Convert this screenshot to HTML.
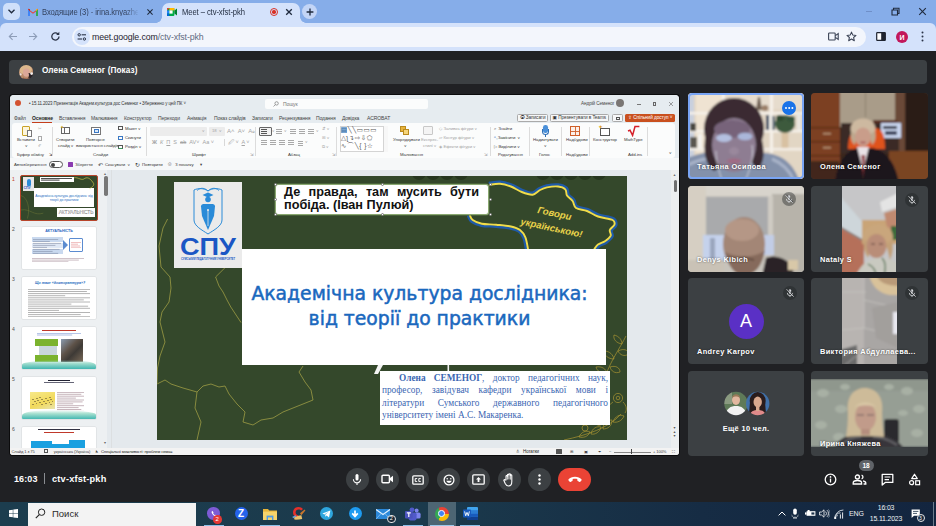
<!DOCTYPE html>
<html lang="uk">
<head>
<meta charset="utf-8">
<title>Meet – ctv-xfst-pkh</title>
<style>
*{box-sizing:border-box;margin:0;padding:0}
html,body{width:936px;height:526px;overflow:hidden;background:#202124;font-family:"Liberation Sans","DejaVu Sans",sans-serif;}
#root{position:relative;width:936px;height:526px;overflow:hidden;background:#202124}
.abs{position:absolute}
.t{position:absolute;white-space:nowrap;line-height:1}
/* chrome */
#tabstrip{left:0;top:0;width:936px;height:32px;background:#86ade9}
#toolbar{left:0;top:23px;width:936px;height:28px;background:#d4e2fb;border-radius:6px 6px 0 0}
#omni{left:72px;top:27px;width:794px;height:20px;border-radius:10px;background:#f3f6fc}
#acttab{left:162px;top:3px;width:138px;height:21px;background:#d4e2fb;border-radius:7px 7px 0 0}
/* meet */
#pbar{left:9px;top:60px;width:918px;height:24px;border-radius:4px;background:#3c4043}
.tile{position:absolute;border-radius:4px;background:#3c4043;overflow:hidden}
.nm{position:absolute;left:9px;bottom:8px;color:#fff;font-size:7.4px;font-weight:bold;white-space:nowrap;letter-spacing:0.36px;text-shadow:0 0 2px rgba(0,0,0,.6)}
.mute{position:absolute;right:6px;top:6px;width:14px;height:14px;border-radius:50%;background:rgba(32,33,36,.65)}
.mb{position:absolute;top:468px;width:23px;height:23px;border-radius:50%;background:#3c4043}
.s5{font-size:5px;letter-spacing:-0.1px}
.g{color:#3a3a3a}.lg{color:#a5a5a5}
.sep{top:32px;width:0.7px;height:29px;background:#dcdcdc}
.lines{height:5px;background:repeating-linear-gradient(180deg,#555 0 0.7px,transparent 0.7px 2px)}
.l2{background:repeating-linear-gradient(180deg,#a9a9a9 0 0.7px,transparent 0.7px 2px)}
.s5r{font-size:4.3px;letter-spacing:-0.05px}
.s4{font-size:4.1px;letter-spacing:-0.1px}
.thumb{left:12px;width:74px;height:41.5px;background:#fff;border-radius:1px;overflow:hidden;box-shadow:0 0 0 0.5px #d5d8da}
.hd{position:absolute;width:3.4px;height:3.4px;border-radius:50%;background:#fff;border:0.6px solid #777}
/* taskbar */
#taskbar{left:0;top:501.5px;width:936px;height:24.5px;background:linear-gradient(90deg,#1c3d4e 0%,#1b3a4c 45%,#162c44 75%,#13253f 100%)}
</style>
</head>
<body>
<div id="root">

<!-- ===== CHROME TAB STRIP ===== -->
<div id="tabstrip" class="abs"></div>
<div class="abs" style="left:3px;top:3px;width:17px;height:17px;border-radius:5px;background:#cfdffa"></div>
<svg class="abs" style="left:7px;top:8px" width="9" height="7" viewBox="0 0 9 7"><path d="M1.5 1.8 L4.5 4.8 L7.5 1.8" fill="none" stroke="#1f2a3d" stroke-width="1.3"/></svg>
<!-- gmail icon -->
<svg class="abs" style="left:28px;top:8px" width="10" height="8" viewBox="0 0 10 8"><path d="M0 8V0.8L5 4.6 10 0.8V8H8V3.4L5 5.8 2 3.4V8Z" fill="#ea4335"/><rect x="0" y="2" width="2" height="6" fill="#4285f4"/><rect x="8" y="2" width="2" height="6" fill="#34a853"/><path d="M0 0.8 L2 3.4V1.2Z" fill="#c5221f"/><path d="M10 0.8 L8 3.4V1.2Z" fill="#fbbc04"/></svg>
<div class="t" style="left:42px;top:7.700px;width:108px;overflow:hidden;font-size:8.6px;color:#34435f;letter-spacing:-0.1px;transform:scaleX(.89);transform-origin:0 0">Входящие (3) - irina.knyazheva</div>
<div class="abs" style="left:125px;top:4px;width:15px;height:16px;background:linear-gradient(90deg,rgba(134,173,233,0),#86ade9)"></div>
<svg class="abs" style="left:146px;top:8px" width="8" height="8" viewBox="0 0 8 8"><path d="M1.400 1.400L6.600 6.600M6.600 1.400L1.400 6.600" stroke="#1f2a3d" stroke-width="1.050"/></svg>
<!-- active tab -->
<div id="acttab" class="abs"></div>
<div class="abs" style="left:156px;top:17px;width:6px;height:6px;background:radial-gradient(circle at 0 0,rgba(0,0,0,0) 5.5px,#d4e2fb 6px)"></div>
<div class="abs" style="left:300px;top:17px;width:6px;height:6px;background:radial-gradient(circle at 100% 0,rgba(0,0,0,0) 5.5px,#d4e2fb 6px)"></div>
<!-- meet icon -->
<svg class="abs" style="left:167px;top:8px" width="10" height="8" viewBox="0 0 10 8"><rect x="0" y="0" width="7.4" height="8" rx="1" fill="#00ac47"/><path d="M0 2.4 L2.4 0 H0Z" fill="#ea4335"/><rect x="0" y="2.4" width="2.4" height="3.2" fill="#2684fc"/><rect x="2.4" y="0" width="5" height="2.4" fill="#ffba00"/><rect x="0" y="5.6" width="2.4" height="2.4" rx="0.6" fill="#0066da"/><rect x="2.4" y="2.4" width="3.2" height="3.2" fill="#fff"/><path d="M7.4 2.6 L10 0.6 V7.4 L7.4 5.4Z" fill="#00832d"/></svg>
<div class="t" style="left:181.5px;top:7.700px;font-size:8.6px;color:#1f2a3d;letter-spacing:-0.1px;transform:scaleX(.89);transform-origin:0 0">Meet – ctv-xfst-pkh</div>
<div class="abs" style="left:270px;top:8px;width:8px;height:8px;border-radius:50%;border:1.2px solid #d93025;"></div>
<div class="abs" style="left:272.3px;top:10.3px;width:3.4px;height:3.4px;border-radius:50%;background:#d93025"></div>
<svg class="abs" style="left:285px;top:8px" width="8" height="8" viewBox="0 0 8 8"><path d="M1.2 1.2L6.8 6.8M6.8 1.2L1.2 6.8" stroke="#1f2a3d" stroke-width="1.3"/></svg>
<!-- new tab -->
<div class="abs" style="left:302px;top:4px;width:15px;height:15px;border-radius:50%;background:#c3d5f6"></div>
<svg class="abs" style="left:305.5px;top:7.5px" width="8" height="8" viewBox="0 0 8 8"><path d="M4 0.6V7.4M0.6 4H7.4" stroke="#1f2a3d" stroke-width="1.3"/></svg>
<!-- window controls -->
<div class="abs" style="left:866px;top:11px;width:6px;height:1px;background:#6f8fc8"></div>
<svg class="abs" style="left:891px;top:7px" width="9" height="9" viewBox="0 0 9 9"><path d="M1 3H6.5V8H1Z M2.5 3V1.2H8V6.5H6.5" fill="none" stroke="#1f2a3d" stroke-width="1.1"/></svg>
<svg class="abs" style="left:918px;top:7px" width="9" height="9" viewBox="0 0 9 9"><path d="M1.2 1.2L7.8 7.8M7.8 1.2L1.2 7.8" stroke="#1f2a3d" stroke-width="1.1"/></svg>

<!-- ===== CHROME TOOLBAR ===== -->
<div id="toolbar" class="abs"></div>
<div id="omni" class="abs"></div>
<svg class="abs" style="left:8px;top:32px" width="10" height="9" viewBox="0 0 10 9"><path d="M9 4.5H1.5M4.6 1.2L1.3 4.5 4.6 7.8" fill="none" stroke="#8d9db8" stroke-width="1.1"/></svg>
<svg class="abs" style="left:28px;top:32px" width="10" height="9" viewBox="0 0 10 9"><path d="M1 4.5H8.5M5.4 1.2L8.7 4.5 5.4 7.8" fill="none" stroke="#8d9db8" stroke-width="1.1"/></svg>
<svg class="abs" style="left:50px;top:31px" width="11" height="11" viewBox="0 0 11 11"><path d="M9 5.5A3.6 3.6 0 1 1 7.9 2.9" fill="none" stroke="#2a3347" stroke-width="1.3"/><path d="M9.3 0.8V3.9H6.2Z" fill="#2a3347"/></svg>
<div class="abs" style="left:74px;top:29px;width:16px;height:16px;border-radius:50%;background:#d4e2fb"></div>
<svg class="abs" style="left:77px;top:33px" width="10" height="8" viewBox="0 0 10 8"><circle cx="2.2" cy="1.8" r="1.2" fill="none" stroke="#2a3347" stroke-width="1"/><path d="M4.6 1.8H9" stroke="#2a3347" stroke-width="1.1"/><circle cx="7.4" cy="6" r="1.2" fill="none" stroke="#2a3347" stroke-width="1"/><path d="M0.6 6H5" stroke="#2a3347" stroke-width="1.1"/></svg>
<div class="t" style="left:92px;top:32.800px;font-size:8.8px;color:#1f2430;letter-spacing:-0.12px">meet.google.com<span style="color:#5f6b80">/ctv-xfst-pkh</span></div>
<!-- right icons -->
<svg class="abs" style="left:828px;top:32px" width="11" height="9" viewBox="0 0 11 9"><rect x="0.6" y="1" width="6.6" height="7" rx="0.8" fill="none" stroke="#3a4254" stroke-width="1.1"/><path d="M7.4 3.6L10.2 1.6V7.4L7.4 5.4" fill="none" stroke="#3a4254" stroke-width="1.1"/></svg>
<svg class="abs" style="left:846px;top:31px" width="11" height="11" viewBox="0 0 11 11"><path d="M5.5 1.1L6.8 4.1 10 4.4 7.6 6.5 8.3 9.7 5.5 8 2.7 9.7 3.4 6.5 1 4.4 4.2 4.1Z" fill="none" stroke="#3a4254" stroke-width="1.05" stroke-linejoin="round"/></svg>
<svg class="abs" style="left:876px;top:32px" width="10" height="9" viewBox="0 0 10 9"><rect x="0.7" y="0.7" width="8.6" height="7.6" rx="0.6" fill="#fff" stroke="#1f2430" stroke-width="1.2"/><rect x="5.2" y="0.7" width="4.1" height="7.6" fill="#1f2430"/></svg>
<div class="abs" style="left:896px;top:31px;width:12px;height:12px;border-radius:50%;background:#c2185b"></div>
<div class="t" style="left:896px;top:33.5px;width:12px;text-align:center;font-size:7px;font-weight:bold;color:#fff">И</div>
<svg class="abs" style="left:921px;top:31px" width="3" height="11" viewBox="0 0 3 11"><circle cx="1.5" cy="1.6" r="1" fill="#2a3347"/><circle cx="1.5" cy="5.5" r="1" fill="#2a3347"/><circle cx="1.5" cy="9.4" r="1" fill="#2a3347"/></svg>

<!-- ===== MEET PRESENTER BAR ===== -->
<div id="pbar" class="abs"></div>
<svg class="abs" style="left:18.800px;top:64.600px" width="14.400" height="14.400" viewBox="0 0 14.400 14.400"><defs><clipPath id="cpv"><circle cx="7.200" cy="7.200" r="7.200"/></clipPath></defs><g clip-path="url(#cpv)"><g filter="url(#b05)"><rect width="14.400" height="14.400" fill="#b98a6a"/><ellipse cx="6.500" cy="4.500" rx="6.500" ry="5" fill="#dcb78c"/><ellipse cx="7.400" cy="7.600" rx="3.400" ry="4.200" fill="#dba898"/><path d="M1 7 C0 10 1 13 3 14.400 L0 14.400 V7Z" fill="#c99a78"/><path d="M9.500 8 C12 8 14.400 9 14.400 11 V14.400 H8 C10 13 10.500 10 9.500 8Z" fill="#2a2026"/><circle cx="12.600" cy="8.600" r="1.300" fill="#f4f0f0"/><circle cx="1.600" cy="9.400" r="1.100" fill="#efe6e2"/><path d="M4 12.500 C6 14 9 14 10.500 12.500 V14.400 H4Z" fill="#8a5a4a"/></g></g></svg>
<div class="t" style="left:42px;top:67px;font-size:8.2px;font-weight:bold;color:#fff;letter-spacing:0.1px">Олена Семеног (Показ)</div>

<!-- ===== SCREEN SHARE (PowerPoint) ===== -->
<div class="abs" style="left:9px;top:94px;width:671px;height:362px;background:#0b0b0c;border-radius:4px"></div>
<div id="ppt" class="abs" style="left:10px;top:95px;width:669px;height:360px;background:#e6ecf0;border-radius:4px 4px 3px 3px;overflow:hidden">
  <!-- title bar -->
  <div class="abs" style="left:0;top:0;width:669px;height:28px;background:#e6ecf0"></div>
  <div class="abs" style="left:5px;top:5px;width:6px;height:6px;border-radius:50%;background:#d35230"></div>
  <div class="t s5" style="left:19px;top:7.300px;color:#333;font-size:4.450px">• 15.11.2023 Презентація Академ.культура дос Семеног • Збережено у цей ПК ˅</div>
  <div class="abs" style="left:255px;top:3.500px;width:162.500px;height:10.500px;border-radius:2px;background:#fbfcfc"></div>
  <div class="t s5" style="left:273px;top:6.500px;color:#777">Пошук</div>
  <svg class="abs" style="left:263px;top:5.800px" width="6" height="6" viewBox="0 0 6 6"><circle cx="3.6" cy="2.4" r="1.7" fill="none" stroke="#666" stroke-width="0.6"/><path d="M2.3 3.7L0.5 5.5" stroke="#666" stroke-width="0.6"/></svg>
  <div class="t s5r" style="left:571px;top:7px;color:#444;font-size:4.6px">Андрій Семеног</div>
  <div class="abs" style="left:606px;top:4px;width:8px;height:8px;border-radius:50%;background:#7a7674"></div>
  <div class="abs" style="left:626.500px;top:9px;width:4px;height:1px;background:#777"></div>
  <div class="abs" style="left:642.500px;top:7px;width:3px;height:4px;border:0.6px solid #666"></div>
  <svg class="abs" style="left:657.700px;top:6px" width="6" height="6" viewBox="0 0 6 6"><path d="M1 1L5 5M5 1L1 5" stroke="#666" stroke-width="0.6"/></svg>
  <!-- tabs -->
  <div class="t s5" style="left:4px;top:21px;color:#444">Файл</div>
  <div class="t s5" style="left:22px;top:21px;color:#222;font-weight:bold">Основне</div>
  <div class="abs" style="left:22px;top:27px;width:20px;height:1px;background:#c43e1c"></div>
  <div class="t s5" style="left:49px;top:21px;color:#444">Вставлення</div>
  <div class="t s5" style="left:81px;top:21px;color:#444">Малювання</div>
  <div class="t s5" style="left:114px;top:21px;color:#444">Конструктор</div>
  <div class="t s5" style="left:148px;top:21px;color:#444">Переходи</div>
  <div class="t s5" style="left:177px;top:21px;color:#444">Анімація</div>
  <div class="t s5" style="left:204px;top:21px;color:#444">Показ слайдів</div>
  <div class="t s5" style="left:242px;top:21px;color:#444">Записати</div>
  <div class="t s5" style="left:269px;top:21px;color:#444">Рецензування</div>
  <div class="t s5" style="left:306px;top:21px;color:#444">Подання</div>
  <div class="t s5" style="left:332px;top:21px;color:#444">Довідка</div>
  <div class="t s5" style="left:357px;top:21px;color:#444">ACROBAT</div>
  <!-- right buttons -->
  <div class="abs" style="left:507px;top:19px;width:31px;height:8px;border:0.6px solid #aaa;border-radius:1.5px;background:#f6f7f8"></div>
  <div class="t s5r" style="left:509.500px;top:20.800px;color:#333;font-size:4.700px">⦿ Записати</div>
  <div class="abs" style="left:540px;top:19px;width:59px;height:8px;border:0.6px solid #aaa;border-radius:1.5px;background:#f6f7f8"></div>
  <div class="t s5r" style="left:542.500px;top:20.800px;color:#333;font-size:4.700px">▣ Презентувати в Teams</div>
  <div class="abs" style="left:602px;top:19px;width:11px;height:8px;border:0.6px solid #aaa;border-radius:1.5px;background:#f6f7f8"></div>
  <div class="abs" style="left:605.5px;top:21.5px;width:4px;height:3px;border:0.6px solid #555"></div>
  <div class="abs" style="left:615px;top:19px;width:50px;height:8px;border-radius:1.5px;background:#c9501f"></div>
  <div class="t s5r" style="left:618px;top:20.800px;color:#fff;font-size:4.700px">⇪ Спільний доступ ˅</div>
  <!-- ribbon card -->
  <div class="abs" style="left:2px;top:28.300px;width:663px;height:34.700px;background:#fbfcfc;border-radius:3px"></div>
  <div class="abs" style="left:0;top:63px;width:669px;height:12px;background:#f6f8f9"></div>
    <!-- clipboard group -->
  <div class="abs" style="left:12px;top:31px;width:8px;height:10px;border:0.8px solid #c9a227;border-radius:1px;background:#fdf6dc"></div>
  <div class="abs" style="left:17px;top:35px;width:5px;height:7px;border:0.7px solid #777;background:#fff"></div>
  <div class="t s5r g" style="left:7px;top:43px">Вставити</div>
  <div class="t s5r g" style="left:15px;top:49px">˅</div>
  <div class="t s5r g" style="left:7px;top:57.5px">Буфер обміну</div>
  <div class="t s5r lg" style="left:28px;top:32px">✂</div>
  <div class="abs" style="left:28px;top:41px;width:3.5px;height:4.5px;border:0.6px solid #aaa"></div>
  <div class="t s5r lg" style="left:28px;top:49px">✐</div>
  <div class="t s5r g" style="left:39px;top:57.5px">⇲</div>
  <div class="abs sep" style="left:42px"></div>
  <!-- slides group -->
  <div class="abs" style="left:51px;top:32px;width:9px;height:7px;border:0.8px solid #666;background:#fff"></div>
  <div class="abs" style="left:54px;top:32px;width:0.8px;height:7px;background:#666"></div>
  <div class="abs" style="left:50px;top:30px;width:4px;height:4px;color:#c9a227;font-size:5px;line-height:4px">✦</div>
  <div class="t s5r g" style="left:46px;top:43px">Створити</div>
  <div class="t s5r g" style="left:48px;top:49px">слайд ˅</div>
  <div class="abs" style="left:81px;top:32px;width:10px;height:7.5px;border:0.8px solid #777;background:#fff"></div>
  <div class="abs" style="left:83.5px;top:34px;width:5px;height:4px;border:0.7px solid #3b78c3;background:#dbe8f7"></div>
  <div class="t s5r g" style="left:76px;top:43px">Повторне</div>
  <div class="t s5r g" style="left:66px;top:49px">використання слайдів</div>
  <div class="abs" style="left:108px;top:31px;width:5px;height:4px;border:0.7px solid #555;border-top-width:1.4px"></div>
  <div class="t s5r g" style="left:115px;top:31.5px">Макет ˅</div>
  <div class="abs" style="left:108px;top:40.5px;width:5px;height:4px;border:0.7px solid #3b78c3"></div>
  <div class="t s5r g" style="left:115px;top:41px">Скинути</div>
  <div class="abs" style="left:108px;top:49.5px;width:5px;height:4px;border:0.7px solid #555;border-bottom:1.4px solid #3a9b5c"></div>
  <div class="t s5r g" style="left:115px;top:50px">Розділ ˅</div>
  <div class="t s5r g" style="left:83px;top:57.5px">Слайди</div>
  <div class="abs sep" style="left:136px"></div>
  <!-- font group -->
  <div class="abs" style="left:140px;top:32px;width:57px;height:9px;background:#ececec;border-radius:1px"></div>
  <div class="t s5r lg" style="left:192px;top:34px">˅</div>
  <div class="abs" style="left:199px;top:32px;width:16px;height:9px;background:#ececec;border-radius:1px"></div>
  <div class="t s5r lg" style="left:202px;top:34px">18 &nbsp;˅</div>
  <div class="t s5r lg" style="left:217px;top:33px;font-size:6px">A˄ &nbsp;A˅ &nbsp;A<span style="font-size:4px">ⱺ</span></div>
  <div class="t s5r lg" style="left:142px;top:45px;font-size:5.5px;letter-spacing:0"><b>Ж</b> &nbsp;<i>К</i> &nbsp;<u>П</u> &nbsp;S &nbsp;<s>ab</s> &nbsp;AV˅ &nbsp;Aa ˅</div>
  <div class="abs" style="left:214px;top:44px;width:0.6px;height:7px;background:#d8d8d8"></div>
  <div class="t s5r lg" style="left:218px;top:45px;font-size:5.5px">🖉 ˅ &nbsp;<u>A</u> ˅</div>
  <div class="t s5r g" style="left:182px;top:57.5px">Шрифт</div>
  <div class="t s5r lg" style="left:240px;top:57.5px">⇲</div>
  <div class="abs sep" style="left:245px"></div>
  <!-- paragraph group -->
  <div class="abs" style="left:248.5px;top:32px;width:13px;height:9px;border:0.7px solid #666;border-radius:1px;background:#f1f1f1"></div>
  <div class="abs lines" style="left:250.5px;top:34px;width:6px"></div>
  <div class="abs lines l2" style="left:266px;top:34px;width:6px"></div>
  <div class="abs lines l2" style="left:280px;top:34px;width:6px"></div>
  <div class="abs lines l2" style="left:289px;top:34px;width:6px"></div>
  <div class="abs lines l2" style="left:298px;top:34px;width:6px"></div>
  <div class="t s5r lg" style="left:262px;top:34px">˅</div><div class="t s5r lg" style="left:274px;top:34px">˅</div><div class="t s5r lg" style="left:306px;top:34px">˅</div>
  <div class="abs lines l2" style="left:251px;top:45px;width:6px"></div>
  <div class="abs lines l2" style="left:260px;top:45px;width:6px"></div>
  <div class="abs lines l2" style="left:269px;top:45px;width:6px"></div>
  <div class="abs lines l2" style="left:278px;top:45px;width:6px"></div>
  <div class="abs lines l2" style="left:288px;top:46px;width:5px"></div>
  <div class="t s5r lg" style="left:295px;top:45px">˅</div>
  <div class="t s5r lg" style="left:312px;top:31.5px">⇵ ˅</div>
  <div class="t s5r lg" style="left:312px;top:40.5px">⊞ ˅</div>
  <div class="t s5r lg" style="left:312px;top:49.5px">⧉ ˅</div>
  <div class="t s5r g" style="left:278px;top:57.5px">Абзац</div>
  <div class="t s5r lg" style="left:322px;top:57.5px">⇲</div>
  <div class="abs sep" style="left:326px"></div>
  <!-- drawing group -->
  <div class="abs" style="left:330px;top:31px;width:48px;height:26px;border:0.6px solid #d4d4d4;background:#fff"></div>
  <div class="t" style="left:331px;top:32px;font-size:6.5px;color:#555;letter-spacing:0.6px">▤╲╲▭▭▭</div>
  <div class="t" style="left:331px;top:40px;font-size:6.5px;color:#555;letter-spacing:0.6px">△ʅ↴⇨⇩⬠</div>
  <div class="t" style="left:331px;top:48px;font-size:6.5px;color:#555;letter-spacing:0.6px">∿⌒╲{ }☆</div>
  <div class="abs" style="left:331px;top:32px;width:6px;height:6px;background:#2f7fd0;opacity:.55"></div>
  <div class="abs" style="left:373px;top:31px;width:5px;height:26px;border-left:0.6px solid #d4d4d4;background:#f7f7f7"></div>
  <div class="abs" style="left:390px;top:31px;width:6px;height:6px;background:#e8b33a;border:0.6px solid #b98a1f"></div>
  <div class="abs" style="left:393px;top:34px;width:6px;height:6px;background:#f5d57a;border:0.6px solid #b98a1f"></div>
  <div class="t s5r g" style="left:383px;top:43px">Упорядкувати</div>
  <div class="t s5r g" style="left:394px;top:49px">˅</div>
  <div class="abs" style="left:413px;top:31px;width:10px;height:9px;border:0.7px solid #c8c8c8;border-radius:1px;background:#f4f4f4"></div>
  <div class="t s5r lg" style="left:411px;top:43px">Експрес-</div>
  <div class="t s5r lg" style="left:413px;top:49px">стилі ˅</div>
  <div class="t s5r lg" style="left:429px;top:31.5px">◇ Заливка фігури ˅</div>
  <div class="t s5r lg" style="left:429px;top:40.5px">▱ Контур фігури ˅</div>
  <div class="t s5r lg" style="left:429px;top:49.5px">◈ Ефекти фігури ˅</div>
  <div class="t s5r g" style="left:390px;top:57.5px">Малювання</div>
  <div class="t s5r lg" style="left:474px;top:57.5px">⇲</div>
  <div class="abs sep" style="left:480px"></div>
  <!-- editing -->
  <div class="t s5r g" style="left:484px;top:31.5px">⌕ &nbsp;Знайти</div>
  <div class="t s5r g" style="left:484px;top:40.5px"><span style="color:#3b78c3">ᵃ꜀</span> Замінити &nbsp;˅</div>
  <div class="t s5r g" style="left:484px;top:49.5px">▷ Виділити ˅</div>
  <div class="t s5r g" style="left:488px;top:57.5px">Редагування</div>
  <div class="abs sep" style="left:519px"></div>
  <!-- voice -->
  <div class="abs" style="left:533px;top:30px;width:4.6px;height:8px;border-radius:2.3px;background:#4a90d9"></div>
  <div class="abs" style="left:531.5px;top:34px;width:7.6px;height:6px;border:0.8px solid #2f6fb5;border-top:none;border-radius:0 0 4px 4px"></div>
  <div class="abs" style="left:535px;top:40px;width:0.8px;height:2px;background:#2f6fb5"></div>
  <div class="t s5r g" style="left:523px;top:43px">Надиктувати</div>
  <div class="t s5r g" style="left:534px;top:49px">˅</div>
  <div class="t s5r g" style="left:529px;top:57.5px">Голос</div>
  <div class="abs sep" style="left:551px"></div>
  <!-- addins -->
  <div class="abs" style="left:560px;top:31px;width:10px;height:10px;border:0.9px solid #d0602a;background:linear-gradient(#d0602a,#d0602a) 50% 0/0.9px 100% no-repeat,linear-gradient(#d0602a,#d0602a) 0 50%/100% 0.9px no-repeat,#fdf1ea"></div>
  <div class="t s5r g" style="left:556px;top:43px">Надбудови</div>
  <div class="t s5r g" style="left:556px;top:57.5px">Надбудови</div>
  <div class="abs sep" style="left:579px"></div>
  <div class="abs" style="left:590px;top:33px;width:10px;height:8px;border:0.8px solid #555;border-top-width:1.6px;background:#fff"></div>
  <div class="t" style="left:588px;top:29px;font-size:6px;color:#e0a020">✦</div>
  <div class="t s5r g" style="left:583px;top:43px">Конструктор</div>
  <svg class="abs" style="left:617px;top:30px" width="13" height="12" viewBox="0 0 13 12"><path d="M1 6L3 5.2 5.6 10.4 8 1.6H12.4" fill="none" stroke="#d5202a" stroke-width="1.5"/></svg>
  <div class="t s5r g" style="left:614px;top:43px">MathType</div>
  <div class="t s5r g" style="left:618px;top:57.5px">Add-ins</div>
  <div class="abs sep" style="left:637px"></div>
  <div class="t s5r g" style="left:659px;top:56px">˅</div>
  <!-- quick access -->
  <div class="t s5r g" style="left:4px;top:67.5px">Автозбереження</div>
  <div class="abs" style="left:39px;top:66px;width:14px;height:7px;border:0.7px solid #555;border-radius:3.5px;background:#fff"></div>
  <div class="abs" style="left:40.5px;top:67.5px;width:4px;height:4px;border-radius:50%;background:#444"></div>
  <div class="abs" style="left:58px;top:67px;width:5px;height:5px;background:#8a3ab0;border-radius:0.6px"></div>
  <div class="t s5r g" style="left:65px;top:67.5px">Зберегти</div>
  <div class="t s5r g" style="left:88px;top:67px;font-size:6px">↶</div>
  <div class="t s5r g" style="left:95px;top:67.5px">Скасувати &nbsp;˅</div>
  <div class="t s5r g" style="left:125px;top:67px;font-size:6px">↻</div>
  <div class="t s5r g" style="left:132px;top:67.5px">Повторити</div>
  <div class="t s5r g" style="left:158px;top:67px">⎙</div>
  <div class="t s5r g" style="left:165px;top:67.5px">З початку</div>
  <div class="t s5r g" style="left:190px;top:67.5px">▾</div>

  <!-- slide workspace -->
  <div class="abs" style="left:0;top:75px;width:669px;height:278px;background:#e4e9ed"></div>
  <div class="abs" style="left:0;top:75px;width:97px;height:278px;background:#edf0f2"></div>
    <!-- thumbnails panel -->
  <div class="t s5" style="left:2px;top:82px;color:#c43e1c">1</div>
  <div class="t s5" style="left:2px;top:132px;color:#555">2</div>
  <div class="t s5" style="left:2px;top:182px;color:#555">3</div>
  <div class="t s5" style="left:2px;top:232px;color:#555">4</div>
  <div class="t s5" style="left:2px;top:282px;color:#555">5</div>
  <div class="t s5" style="left:2px;top:332px;color:#555">6</div>
  <!-- thumb 1 -->
  <div class="abs" style="left:10px;top:80px;width:78px;height:46px;border:1.5px solid #b8452b;border-radius:2px;background:#34482b;overflow:hidden">
    <div class="abs" style="left:2px;top:1px;width:11px;height:14px;background:#e8e8e8"></div>
    <div class="abs" style="left:5.5px;top:2.5px;width:4px;height:7px;border-radius:2px 2px 1px 1px;background:#2a8bd8"></div>
    <div class="t" style="left:2.5px;top:10.5px;font-size:3.5px;font-weight:bold;color:#1a56c4">СПУ</div>
    <div class="abs" style="left:19px;top:1px;width:34px;height:5px;background:#fff"></div>
    <svg class="abs" style="left:20px;top:1.8px;opacity:1" width="31" height="3.4" viewBox="0 0 31 3.4"><path d="M0 0.4H31M0 2.1H18.6M0 3.8H31" stroke="#222" stroke-width="0.9" fill="none"/></svg>
    <div class="abs" style="left:13px;top:12px;width:60px;height:19px;background:#fff"></div>
    <div class="t" style="left:13px;top:17.5px;width:60px;text-align:center;font-size:3.4px;line-height:4.3px;color:#1f6fbf;white-space:normal">Академічна культура дослідника: від теорії до практики</div>
    <div class="abs" style="left:36px;top:32px;width:38px;height:9px;background:#fff"></div>
    <div class="t" style="left:36px;top:33.5px;width:38px;text-align:center;font-size:5px;color:#222;letter-spacing:-0.2px;-webkit-text-stroke:0.2px #fff">АКТУАЛЬНІСТЬ</div>
    <svg class="abs" style="left:0;top:0" width="75" height="43" viewBox="0 0 470 264"><path d="M333 8C360 4 380 30 400 12 420 0 440 20 455 44 460 60 440 70 430 76" fill="none" stroke="#d9cf4a" stroke-width="4"/><path d="M0 120C40 130 60 200 40 264M0 210C60 200 80 250 140 230" fill="none" stroke="#8f9440" stroke-width="2"/></svg>
  </div>
  <!-- thumb 2 -->
  <div class="abs thumb" style="top:132px">
    <div class="t" style="left:0;top:3px;width:74px;text-align:center;font-size:3.6px;font-weight:bold;color:#2a5fc0">АКТУАЛЬНІСТЬ</div>
    <div class="abs" style="left:10px;top:10px;width:31px;height:5px;background:#c9d9ef"></div>
    <div class="abs" style="left:10px;top:16px;width:31px;height:5px;background:#dfe8f5"></div>
    <div class="abs" style="left:10px;top:22px;width:31px;height:5px;background:#c9d9ef"></div>
    <svg class="abs" style="left:11px;top:11.5px;opacity:0.8" width="28" height="15" viewBox="0 0 28 15"><path d="M0 0.4H25.2M0 2.4H16.8M0 4.4H28M0 6.4H22.4M0 8.4H14.0M0 10.4H26.6M0 12.4H19.6M0 14.4H25.2" stroke="#56617a" stroke-width="0.5" fill="none"/></svg>
    <div class="abs" style="left:41px;top:13px;width:0;height:0;border-left:5px solid #5b8bd0;border-top:5.5px solid transparent;border-bottom:5.5px solid transparent"></div>
    <div class="abs" style="left:47px;top:11px;width:14px;height:14px;border:0.6px solid #5b8bd0;border-radius:1px"></div>
    <svg class="abs" style="left:49px;top:15px;opacity:0.9" width="10" height="6" viewBox="0 0 10 6"><path d="M0 0.4H10M0 2.2H7.0M0 4.0H9.0M0 5.8H10" stroke="#d66" stroke-width="0.5" fill="none"/></svg>
    <svg class="abs" style="left:10px;top:31px;opacity:0.9" width="52" height="4" viewBox="0 0 52 4"><path d="M0 0.4H52M0 2.1H46.8M0 3.8H36.4" stroke="#8a6a7a" stroke-width="0.5" fill="none"/></svg>
  </div>
  <!-- thumb 3 -->
  <div class="abs thumb" style="top:182px">
    <div class="t" style="left:13px;top:5px;font-size:3.6px;font-style:italic;font-weight:bold;color:#2a6fc0">Що таке «докторантура»?</div>
    <svg class="abs" style="left:6px;top:12px;opacity:0.8" width="62" height="28" viewBox="0 0 62 28"><path d="M0 0.4H62M0 2.5H58.9M0 4.6H62M0 6.7H37.2M0 8.8H62M0 10.9H55.8M0 13.0H62M0 15.1H43.4M0 17.2H60.1M0 19.3H62M0 21.4H31.0M0 23.5H62M0 25.6H52.7M0 27.7H62" stroke="#555" stroke-width="0.55" fill="none"/></svg>
  </div>
  <!-- thumb 4 -->
  <div class="abs thumb" style="top:232px">
    <div class="abs" style="left:20px;top:2.5px;width:34px;height:1px;background:#c0392b"></div>
    <svg class="abs" style="left:15px;top:5.5px;opacity:0.9" width="44" height="3.5" viewBox="0 0 44 3.5"><path d="M0 0.4H44M0 2.0H35.2M0 3.6H26.4" stroke="#4a6fc0" stroke-width="0.5" fill="none"/></svg>
    <div class="abs" style="left:13px;top:12px;width:23px;height:7px;background:#7bb32e"></div>
    <div class="abs" style="left:13px;top:28px;width:23px;height:7px;background:#7bb32e"></div>
    <div class="abs" style="left:17px;top:19px;width:18px;height:9px;background:#c9d6dc"></div>
    <div class="abs" style="left:39px;top:12px;width:22px;height:23px;background:linear-gradient(135deg,#8a9bb0 0%,#5e5248 40%,#3e3a36 60%,#7a6a58 100%)"></div>
    <div class="abs" style="left:0;top:33px;width:74px;height:9px;background:linear-gradient(180deg,rgba(255,255,255,0) 0,#9fdccd 40%,#3fb5b0 100%);border-radius:60% 40% 0 0/50% 60% 0 0"></div>
  </div>
  <!-- thumb 5 -->
  <div class="abs thumb" style="top:282px">
    <div class="abs" style="left:26px;top:2.5px;width:22px;height:1px;background:#223"></div>
    <div class="abs" style="left:22px;top:5px;width:30px;height:0.7px;background:#667"></div>
    <div class="abs" style="left:8px;top:15px;width:25px;height:17px;background:linear-gradient(160deg,#f7e98a,#f1d95a 60%,#e9e4b0)"></div>
    <div class="abs" style="left:10px;top:20px;width:21px;height:8px;background:repeating-linear-gradient(165deg,#7a6a3a 0 0.5px,transparent 0.5px 2.4px);opacity:.7"></div>
    <svg class="abs" style="left:35px;top:15px;opacity:0.85" width="27" height="19" viewBox="0 0 27 19"><path d="M0 0.4H27M0 2.3H24.3M0 4.2H27M0 6.1H18.9M0 8.0H27M0 9.9H25.6M0 11.8H16.2M0 13.7H27M0 15.6H21.6M0 17.5H24.3M0 19.4H27" stroke="#7a5060" stroke-width="0.5" fill="none"/></svg>
    <div class="abs" style="left:0;top:33px;width:74px;height:9px;background:linear-gradient(180deg,rgba(255,255,255,0) 0,#a8e0d0 40%,#45b8b2 100%);border-radius:40% 60% 0 0/60% 50% 0 0"></div>
  </div>
  <!-- thumb 6 -->
  <div class="abs thumb" style="top:332px;height:21px;border-radius:1px 1px 0 0">
    <div class="abs" style="left:16px;top:2px;width:42px;height:1px;background:#334"></div>
    <div class="abs" style="left:22px;top:4.5px;width:30px;height:0.8px;background:#c0392b"></div>
    <div class="abs" style="left:9px;top:14px;width:21px;height:8px;background:#1aa0e0"></div>
    <div class="abs" style="left:30px;top:17px;width:17px;height:5px;background:#1aa0e0"></div>
    <div class="abs" style="left:47px;top:13px;width:16px;height:9px;background:#1aa0e0"></div>
  </div>
  <!-- thumbs scrollbar -->
  <div class="abs" style="left:94px;top:81px;width:3.600px;height:20px;border-radius:1.800px;background:#787878"></div>
  <div class="t" style="left:94px;top:76.500px;font-size:4px;color:#666">▴</div>
  <div class="t" style="left:94px;top:346px;font-size:4px;color:#666">▾</div>
  <div class="abs" style="left:101px;top:75px;width:1px;height:278px;background:#dcdfe1"></div>

  <!-- main slide -->
  <div id="slide" class="abs" style="left:147px;top:81px;width:470px;height:264px;background:#34482b;overflow:hidden">
    <svg class="abs" style="left:0;top:0" width="470" height="264" viewBox="0 0 470 264">
      <!-- faint region borders -->
      <g fill="none" stroke="#a9a648" stroke-width="0.8" opacity=".9">
        <path d="M0 208 L8 204 14 208 26 212 40 216 46 210 54 208 62 211 68 210 72 218 80 228 88 236 86 246 96 249 104 244 116 242 126 236 136 232 146 228 156 224 154 214 148 206 142 196 146 190"/>
        <path d="M10.600 43 L6 52 2 70 4 91 13 101 14 112 12 126 5 136 3 146 8 166 3 180 .5 192 0 207"/>
        <path d="M68.700 91 L58.600 101 62 110 66 116 70 124 73.800 131 84 146.500"/>
        <path d="M40 216 L38 232 44 246 40 264"/>
      </g>
      <!-- top scallops -->
      <g fill="#26361f"><circle cx="262" cy="-3" r="7"/><circle cx="276" cy="-3" r="7"/><circle cx="290" cy="-3" r="7"/><circle cx="304" cy="-3" r="7"/><circle cx="386" cy="-3" r="7"/><circle cx="400" cy="-3" r="7"/><circle cx="414" cy="-3" r="7"/><circle cx="428" cy="-3" r="7"/><circle cx="442" cy="-3" r="7"/></g>
      <!-- Ukraine outline blue (outer) -->
      <path d="M332.8 6.8 C334.6 6.7 339.5 5.6 343.2 5.9 C346.8 6.2 350.9 7.3 354.6 8.7 C358.3 10.1 362.0 12.9 365.5 14.2 C368.9 15.6 372.6 17.1 375.4 16.8 C378.2 16.5 379.8 13.5 382.1 12.3 C384.5 11.1 386.5 10.2 389.6 9.5 C392.8 8.9 397.9 8.2 401.2 8.6 C404.5 9.0 407.9 10.3 409.7 12.0 C411.4 13.6 410.4 16.6 411.6 18.6 C412.9 20.6 415.7 21.9 417.1 23.9 C418.5 25.9 417.8 28.9 420.1 30.4 C422.3 32.0 427.1 31.8 430.7 33.2 C434.3 34.6 437.3 37.2 441.6 38.7 C445.9 40.2 453.5 40.5 456.4 42.3 C459.4 44.1 459.5 47.2 459.2 49.2 C458.9 51.3 455.2 52.8 454.6 54.6 C454.0 56.5 456.3 58.3 455.5 60.3 C454.6 62.3 451.6 64.9 449.4 66.6 C447.2 68.2 443.9 68.9 442.1 70.1 C440.4 71.4 439.4 73.5 438.9 74.2" fill="none" stroke="#1f5aa8" stroke-width="2.6" stroke-linecap="round"/>
      <path d="M311.4 40.6 C311.9 41.4 312.4 44.0 314.6 45.6 C316.8 47.1 320.3 48.8 324.4 49.7 C328.5 50.5 334.3 50.1 339.1 50.6 C344.0 51.0 349.7 51.5 353.5 52.4 C357.3 53.2 359.7 53.9 361.9 55.5 C364.1 57.1 365.4 59.2 366.6 62.1 C367.9 65.1 368.7 71.5 369.1 73.4" fill="none" stroke="#1f5aa8" stroke-width="2.6" stroke-linecap="round"/>
      <!-- yellow (inner) -->
      <path d="M333.0 8.7 C334.7 8.5 339.5 7.5 343.0 7.8 C346.5 8.1 350.3 9.1 353.9 10.5 C357.5 11.9 361.2 14.6 364.8 16.0 C368.4 17.4 372.6 19.0 375.6 18.7 C378.6 18.4 380.6 15.2 383.0 14.0 C385.4 12.8 387.0 12.0 390.0 11.4 C393.0 10.8 397.9 10.2 401.0 10.5 C404.1 10.8 406.8 11.8 408.3 13.3 C409.8 14.8 408.8 17.7 410.0 19.6 C411.2 21.6 414.1 22.9 415.6 25.0 C417.1 27.1 416.6 30.3 419.0 32.0 C421.4 33.7 426.3 33.6 430.0 35.0 C433.7 36.4 436.7 39.0 441.0 40.5 C445.3 42.0 452.9 42.6 455.6 44.0 C458.3 45.4 457.9 47.0 457.4 48.7 C456.9 50.4 453.4 52.2 452.8 54.0 C452.2 55.8 454.4 57.8 453.7 59.6 C452.9 61.4 450.4 63.5 448.3 65.0 C446.2 66.5 442.8 67.3 441.0 68.6 C439.2 69.9 438.0 72.3 437.4 73.0" fill="none" stroke="#f0dc4a" stroke-width="1.9" stroke-linecap="round"/>
      <path d="M313.0 39.6 C313.4 40.3 313.7 42.6 315.7 44.0 C317.7 45.4 320.9 47.0 324.8 47.8 C328.7 48.6 334.5 48.2 339.3 48.7 C344.1 49.2 349.9 49.6 353.9 50.5 C357.8 51.4 360.6 52.2 363.0 54.0 C365.4 55.8 367.1 58.2 368.4 61.4 C369.7 64.6 370.6 71.1 371.0 73.0" fill="none" stroke="#f0dc4a" stroke-width="1.9" stroke-linecap="round"/>
      <text transform="translate(380,37) rotate(12)" font-family="Liberation Sans, sans-serif" font-weight="bold" font-style="italic" font-size="9.6" fill="#e8d24a">Говори</text>
      <text transform="translate(363,48.5) rotate(12)" font-family="Liberation Sans, sans-serif" font-weight="bold" font-style="italic" font-size="9.6" fill="#e8d24a">українською!</text>
      <!-- botanical line art right-bottom -->
      <g fill="none" stroke="#b09a34" stroke-width="0.7" opacity=".95">
        <path d="M469 160 C463 172 453 186 449 199"/>
        <path d="M465 168 c-6 -1 -9 -5 -8 -9 c5 1 8 5 8 9z M461 175 c6 -3 10 -1 11 3 c-5 3 -9 1 -11 -3z M457 183 c-6 0 -10 -4 -10 -8 c6 0 9 4 10 8z M453 191 c6 -2 10 1 10 5 c-5 2 -9 -1 -10 -5z M450 197 c-6 1 -10 -2 -11 -6 c6 -1 10 2 11 6z"/>
        <circle cx="461" cy="222" r="4.600"/><circle cx="461" cy="222" r="1.800"/><path d="M456 226 c-5 3 -6 8 -4 11 M466 226 c4 4 4 8 2 11"/>
        <path d="M464 238 C452 252 430 259 407 264"/>
        <path d="M456 246 c2 -6 7 -8 11 -6 c-2 5 -7 7 -11 6z M446 253 c0 -6 4 -9 9 -9 c0 6 -4 9 -9 9z M434 258 c1 -6 6 -8 10 -7 c-1 5 -6 8 -10 7z M422 261 c2 -5 7 -7 11 -5 c-2 5 -7 6 -11 5z"/>
        <circle cx="442" cy="246" r="3.400"/><circle cx="428" cy="252" r="3"/>
      </g>
      <!-- white slashes -->
      <path d="M221 189 L226 189 221 198 217 198Z" fill="#f4f4f4"/>
      <rect x="290.5" y="189" width="1.6" height="7" fill="#f4f4f4"/>
    </svg>
    <!-- logo box -->
    <div class="abs" style="left:17px;top:6px;width:68px;height:86px;background:#ebebeb"></div>
    <svg class="abs" style="left:17px;top:6px" width="68" height="86" viewBox="0 0 68 86">
      <path d="M20 8 C24 6 30 6 34 9 C38 6 44 6 48 8 V38 C48 44 40 48 34 52 C28 48 20 44 20 38Z" fill="none" stroke="#2a8bd8" stroke-width="1"/>
      <path d="M23 8.5 C27 5 31 6 34 9 C37 6 41 5 45 8.5" fill="none" stroke="#2a8bd8" stroke-width="0.9"/>
      <path d="M28.5 13 L34 10.5 39.5 13 34 15.5Z" fill="#2a8bd8"/>
      <circle cx="34" cy="17.5" r="2.8" fill="#2a8bd8"/>
      <path d="M29.5 22 H38.5 C40 22 41 23 41 24.5 L40 34 L34 48 L28 34 L27 24.5 C27 23 28 22 29.5 22Z" fill="#2a8bd8"/>
      <path d="M34 28 V44" stroke="#ebebeb" stroke-width="0.8"/><circle cx="34" cy="28" r="1" fill="#ebebeb"/>
      <text x="34" y="72.500" text-anchor="middle" font-family="Liberation Sans, sans-serif" font-weight="bold" font-size="23" fill="#1a56c4" textLength="56" lengthAdjust="spacingAndGlyphs">СПУ</text>
      <text x="34" y="78" text-anchor="middle" font-family="Liberation Sans, sans-serif" font-weight="bold" font-size="2.6" fill="#1a56c4" textLength="54" lengthAdjust="spacingAndGlyphs">СУМСЬКИЙ ПЕДАГОГІЧНИЙ УНІВЕРСИТЕТ</text>
    </svg>
    <!-- quote box -->
    <div class="abs" style="left:117.5px;top:7.5px;width:214.5px;height:31.5px;background:#fff;border:1px solid #8aa871;border-radius:3px;box-shadow:0 0 0 0.5px #5d7a49"></div>
    <div class="abs" style="left:127px;top:10.4px;width:195px;font-size:12.7px;line-height:12.8px;font-weight:bold;color:#111;text-align:justify;text-align-last:left;white-space:normal"><div style="text-align-last:justify">Де правда, там мусить бути</div><div>побіда. (Іван Пулюй)</div></div>
    <!-- handles -->
    <div class="hd" style="left:116.5px;top:6.5px"></div><div class="hd" style="left:224px;top:6.5px"></div><div class="hd" style="left:331.5px;top:6.5px"></div>
    <div class="hd" style="left:116.5px;top:21.5px"></div><div class="hd" style="left:331.5px;top:21.5px"></div>
    <div class="hd" style="left:116.5px;top:36.5px"></div><div class="hd" style="left:224px;top:36.5px"></div><div class="hd" style="left:331.5px;top:36.5px"></div>
    <!-- title box -->
    <div class="abs" style="left:85px;top:73px;width:364px;height:116px;background:#fff"></div>
    <div class="t" style="left:80.5px;top:104.8px;width:364px;text-align:center;font-family:'DejaVu Sans','Liberation Sans',sans-serif;font-size:18.8px;line-height:25.2px;color:#1a68be;-webkit-text-stroke:0.5px #1a68be">Академічна культура дослідника:<br>від теорії до практики</div>
    <!-- author box -->
    <div class="abs" style="left:223px;top:195px;width:230px;height:54px;background:#fff"></div>
    <div class="abs" style="left:225px;top:195.5px;width:226px;font-family:'Liberation Serif','DejaVu Serif',serif;font-size:9.3px;line-height:12.6px;color:#3a66b2;text-align:justify;white-space:normal;text-indent:17px"><b>Олена СЕМЕНОГ</b>, доктор педагогічних наук, професор, завідувач кафедри української мови і літератури Сумського державного педагогічного університету імені А.С. Макаренка.</div>
  </div>
  <!-- right scrollbar of workspace -->
  <div class="abs" style="left:661px;top:75px;width:8px;height:278px;background:#eceeef"></div>
  <div class="abs" style="left:664px;top:85px;width:3px;height:12px;border-radius:1.5px;background:#6e6e6e"></div>
  <div class="t" style="left:663.5px;top:78px;font-size:4px;color:#666">▴</div>
  <div class="t" style="left:663.5px;top:331px;font-size:4px;color:#555;line-height:4px">▾<br>▴<br>▾</div>

  <!-- status bar -->
  <div class="abs" style="left:0;top:353px;width:669px;height:7px;background:#f3f3f3"></div>
    <div class="t s4" style="left:1.5px;top:354.5px;color:#444">Слайд 1 з 75</div>
  <div class="abs" style="left:34px;top:354px;width:3.5px;height:4px;border:0.6px solid #555"></div>
  <div class="t s4" style="left:43.8px;top:354.5px;color:#444">українська (Україна)</div>
  <div class="t s4" style="left:85px;top:354.5px;color:#222">♿</div>
  <div class="t s4" style="left:91px;top:354.5px;color:#222">Спеціальні можливості: проблем немає</div>
  <div class="t s4" style="left:506px;top:354.5px;color:#222">≜</div><div class="t s4" style="left:513px;top:354.5px;color:#222;font-size:4.500px">Нотатки</div>
  <div class="abs" style="left:546px;top:354px;width:5.5px;height:5px;background:#555;border-radius:0.6px"></div>
  <div class="t s4" style="left:560px;top:354.5px;color:#444">⊞</div>
  <div class="t s4" style="left:574px;top:354.5px;color:#444">▣</div>
  <div class="t s4" style="left:588px;top:354.5px;color:#444">⏷</div>
  <div class="t s4" style="left:599px;top:354.5px;color:#444">−</div>
  <div class="abs" style="left:604px;top:356.7px;width:37px;height:0.7px;background:#888"></div>
  <div class="abs" style="left:621px;top:354.3px;width:1.4px;height:5px;background:#444"></div>
  <div class="t s4" style="left:643px;top:354.5px;color:#444">+ 100%</div>
  <div class="t s4" style="left:662px;top:354.5px;color:#444">⛶</div>

</div>


<!-- ===== PARTICIPANT TILES ===== -->
<svg width="0" height="0" style="position:absolute"><defs>
  <filter id="b1" x="-10%" y="-10%" width="120%" height="120%"><feGaussianBlur stdDeviation="1.1"/></filter>
  <filter id="b2" x="-10%" y="-10%" width="120%" height="120%"><feGaussianBlur stdDeviation="2"/></filter>
  <filter id="b05" x="-10%" y="-10%" width="120%" height="120%"><feGaussianBlur stdDeviation="0.6"/></filter>
  
</defs></svg>

<!-- tile 1 : Татьяна Осипова (active speaker) -->
<div class="tile" style="left:688px;top:93px;width:116px;height:86px;background:#d9cdbd">
 <svg class="abs" style="left:0;top:0" width="116" height="86" viewBox="0 0 116 86">
  <g filter="url(#b1)">
   <rect x="-4" y="-4" width="124" height="94" fill="#e2d6c4"/>
   <rect x="8" y="0" width="26" height="60" fill="#efe3d2"/>
   <rect x="38" y="0" width="78" height="16" fill="#e6dccd"/>
   <rect x="-2" y="0" width="8" height="90" fill="#c9d0de"/>
   <rect x="34" y="0" width="3" height="60" fill="#f6f1ea"/><rect x="82" y="0" width="3" height="60" fill="#f6f1ea"/>
   <rect x="0" y="19" width="116" height="2.4" fill="#f6f1ea"/><rect x="0" y="37" width="116" height="2.4" fill="#f6f1ea"/><rect x="0" y="55" width="116" height="2.4" fill="#f4efe8"/>
   <rect x="2" y="30" width="6" height="8" fill="#4a4640"/><rect x="2" y="44" width="7" height="11" fill="#5a564f"/><rect x="10" y="41" width="4" height="14" fill="#f4f2ee"/>
   <path d="M68 17 L70 4 72 4 74 17Z" fill="#6f6052"/><ellipse cx="77" cy="15" rx="3.4" ry="3" fill="#9b7f68"/>
   <rect x="78" y="22" width="3" height="15" fill="#27425e"/><rect x="81" y="21" width="3" height="16" fill="#f0eee8"/><rect x="84.5" y="23" width="2.4" height="14" fill="#4a5b6a"/>
   <ellipse cx="97" cy="31" rx="10" ry="9" fill="#3e5a3c"/><ellipse cx="92" cy="25" rx="4" ry="3" fill="#2e4a30"/><ellipse cx="103" cy="26" rx="4" ry="3" fill="#35523a"/>
   <rect x="93.5" y="40" width="7" height="15" rx="1" fill="#d8c1a2"/>
   <rect x="109" y="20" width="4" height="17" fill="#e9e6e0"/>
   <!-- body -->
   <path d="M-2 90 V66 C10 60 26 57 40 60 L78 60 C94 62 106 70 112 90Z" fill="#8391ab"/>
   <path d="M0 72 C12 66 22 64 30 66 M84 66 C94 70 102 78 106 88" stroke="#a9b4c9" stroke-width="3" fill="none"/>
   <!-- hair -->
   <ellipse cx="46" cy="36" rx="30" ry="31" fill="#3b2c33"/>
   <path d="M18 40 C14 60 18 72 26 78 L40 70Z" fill="#3b2c33"/><path d="M72 40 C78 58 76 70 70 76 L60 66Z" fill="#3b2c33"/>
   <!-- face -->
   <ellipse cx="46" cy="52" rx="22" ry="27" fill="#8e7d92"/>
   <ellipse cx="44" cy="36" rx="18" ry="9" fill="#77647a"/>
   <ellipse cx="36" cy="45" rx="8" ry="4" fill="#b4c0e0"/><ellipse cx="57" cy="43.500" rx="7.400" ry="3.800" fill="#aab7da"/>
   <ellipse cx="46" cy="68" rx="7" ry="2.6" fill="#a06a84"/>
   <ellipse cx="46" cy="58" rx="5" ry="4" fill="#9a889c"/>
   <path d="M64 52 C66 64 62 76 58 86 M28 58 C28 70 32 80 34 88" stroke="#d9dde6" stroke-width="0.8" fill="none"/>
  </g>
 </svg>
 <div class="abs" style="left:0;top:0;width:116px;height:86px;border:2px solid #79a5f5;border-radius:4px"></div>
 <div class="abs" style="left:94px;top:7.5px;width:14px;height:14px;border-radius:50%;background:#1a73e8"></div>
 <div class="abs" style="left:97.2px;top:13.5px;width:2px;height:2px;border-radius:50%;background:#fff;box-shadow:3.2px 0 0 #fff,6.4px 0 0 #fff"></div>
 <div class="nm">Татьяна Осипова</div>
</div>

<!-- tile 2 : Олена Семеног -->
<div class="tile" style="left:811px;top:93px;width:116.5px;height:85.5px;background:#4a3428">
 <svg class="abs" style="left:0;top:0" width="117" height="86" viewBox="0 0 117 86">
  <g filter="url(#b1)">
   <rect x="-4" y="-4" width="126" height="94" fill="#3a261e"/>
   <rect x="28" y="-2" width="58" height="36" fill="#a99c89"/>
   <rect x="54" y="-2" width="1" height="26" fill="#8a7e6c"/>
   <rect x="84" y="-2" width="11" height="60" fill="#6b4a37"/>
   <rect x="94" y="-2" width="26" height="62" fill="#2a1a15"/>
   <rect x="-2" y="-2" width="31" height="92" fill="#7c3f22"/>
   <rect x="-2" y="34" width="31" height="1.4" fill="#5a2c18"/><rect x="-2" y="48" width="31" height="1.4" fill="#5a2c18"/><rect x="-2" y="62" width="31" height="1.4" fill="#5a2c18"/>
   <rect x="12" y="40" width="8" height="1.4" fill="#b99a7a"/><rect x="12" y="54" width="8" height="1.4" fill="#b99a7a"/>
   <rect x="30" y="30" width="58" height="30" fill="#3a2a26"/>
   <rect x="78" y="58" width="42" height="30" fill="#7a4424"/>
   <rect x="70" y="30" width="20" height="15" fill="#c9d6f0"/><rect x="72" y="33" width="14" height="3" fill="#2a2f3e"/><rect x="74" y="38" width="12" height="4" fill="#39405a"/>
   <rect x="62" y="27" width="24" height="3" fill="#5a2f22"/>
   <path d="M37 56 C37 42 42 35 50 35 H64 C72 35 74 44 74 56Z" fill="#df521d"/><rect x="-2" y="68" width="30" height="24" fill="#43251a"/>
   <path d="M24 90 C26 68 36 58 46 55 L62 55 C74 58 84 68 88 90Z" fill="#1d191d"/>
   <path d="M46 54 L52 78 58 54Z" fill="#e9e2e6"/><path d="M50.5 62 L52 86 54 62Z" fill="#8a2a30"/>
   <ellipse cx="52" cy="36" rx="12.5" ry="10.5" fill="#cdb9a0"/>
   <path d="M40 38 C39 46 41 50 44 52 L46 42Z" fill="#bda88e"/><path d="M64 38 C66 46 63 50 61 52 L58 42Z" fill="#bda88e"/>
   <ellipse cx="52" cy="44" rx="8" ry="9.5" fill="#c99d8a"/>
   <ellipse cx="52" cy="49.5" rx="3" ry="1" fill="#a85a5a"/>
  </g>
 </svg>
 <div class="nm">Олена Семеног</div>
</div>

<!-- tile 3 : Denys Kibich -->
<div class="tile" style="left:688px;top:186px;width:116px;height:85.5px;background:#c5c1b9">
 <svg class="abs" style="left:0;top:0" width="116" height="86" viewBox="0 0 116 86">
  <g filter="url(#b1)">
   <rect x="-4" y="-4" width="124" height="94" fill="#c7c3bb"/>
   <rect x="-4" y="-4" width="124" height="14" fill="#d8d4cc"/>
   <rect x="-4" y="-4" width="22" height="94" fill="#d6cfc3"/>
   <rect x="18" y="11" width="66" height="40" fill="#a9aaac"/>
   <rect x="84" y="8" width="34" height="80" fill="#b7b3aa"/>
   <rect x="80" y="10" width="5" height="60" fill="#cfcbc3"/>
   <rect x="15" y="49" width="26" height="26" fill="#c5d2ec"/><rect x="22" y="52" width="5" height="22" fill="#9aa5bd"/>
   <rect x="72" y="49" width="14" height="20" fill="#c2cde6"/>
   <rect x="-4" y="74" width="40" height="16" fill="#c9c2b6"/>
   <path d="M74 90 L78 72 C86 68 98 72 104 80 L106 90Z" fill="#2a2426"/>
   <rect x="100" y="74" width="10" height="10" fill="#d8c8a8"/>
   <ellipse cx="56" cy="58" rx="21" ry="27" fill="#a38676"/>
   <ellipse cx="54" cy="44" rx="17" ry="11" fill="#b59786"/>
   <path d="M37 66 C40 80 46 88 56 90 C68 88 74 80 77 64 C70 72 46 72 37 66Z" fill="#866a5c"/>
   <path d="M46 74 C52 72 60 72 66 74" stroke="#5a443c" stroke-width="1.4" fill="none"/>
  </g>
 </svg>
 <svg class="abs" style="left:94px;top:6px" width="14" height="14"><circle cx="7" cy="7" r="7" fill="#202124" fill-opacity=".42"/><rect x="5.9" y="3.2" width="2.2" height="4.6" rx="1.1" fill="#d6d8db"/><path d="M4.3 6.9A2.7 2.7 0 0 0 9.7 6.9M7 9.6V11" fill="none" stroke="#d6d8db" stroke-width="0.8"/><path d="M3.6 3.2L10.6 10.6" stroke="#d6d8db" stroke-width="0.9"/><path d="M4.2 2.7L11.2 10.1" stroke="#2b2d30" stroke-width="0.6"/></svg>
 <div class="nm">Denys Kibich</div>
</div>

<!-- tile 4 : Nataly S -->
<div class="tile" style="left:811px;top:186px;width:116.5px;height:85.5px">
 <svg class="abs" style="left:31px;top:0" width="54" height="86" viewBox="0 0 54 86">
  <g filter="url(#b1)">
   <rect x="-4" y="-4" width="62" height="94" fill="#c6c6c8"/>
   <path d="M-2 10 L24 40 V56 L-2 42Z" fill="#ced6da"/>
   <path d="M-2 42 L22 56 V90 H-2Z" fill="#b5705a"/>
   <path d="M-2 41 L22 55" stroke="#6a5248" stroke-width="1.2"/>
   <rect x="20" y="34" width="38" height="24" fill="#c9a477"/>
   <path d="M38 16 L58 6 V20 L40 26Z" fill="#e4e4e4"/>
   <path d="M42 27 L58 22 V46 H46Z" fill="#c08a70"/>
   <rect x="49" y="40" width="8" height="14" fill="#3a6a3a"/>
   <path d="M14 90 C18 78 28 72 38 72 C48 72 56 76 58 80 V90Z" fill="#c9c9c0"/>
   <path d="M40 72 C44 76 44 82 42 90 M26 78 C30 80 34 84 34 90" stroke="#4a6a4a" stroke-width="1.2" fill="none"/>
   <ellipse cx="36" cy="51" rx="15" ry="13" fill="#c9a67c"/>
   <path d="M22 54 C21 62 23 68 26 72 L30 58Z" fill="#c2a078"/><path d="M50 54 C52 62 50 70 48 74 L44 58Z" fill="#c2a078"/>
   <ellipse cx="34.5" cy="60" rx="10" ry="12" fill="#b98d78"/>
   <path d="M29 58 h4 M37 58 h4" stroke="#5a4038" stroke-width="1"/>
  </g>
 </svg>
 <svg class="abs" style="left:94px;top:6.5px" width="14" height="14"><circle cx="7" cy="7" r="7" fill="#202124" fill-opacity=".42"/><rect x="5.9" y="3.2" width="2.2" height="4.6" rx="1.1" fill="#d6d8db"/><path d="M4.3 6.9A2.7 2.7 0 0 0 9.7 6.9M7 9.6V11" fill="none" stroke="#d6d8db" stroke-width="0.8"/><path d="M3.6 3.2L10.6 10.6" stroke="#d6d8db" stroke-width="0.9"/><path d="M4.2 2.7L11.2 10.1" stroke="#2b2d30" stroke-width="0.6"/></svg>
 <div class="nm">Nataly S</div>
</div>

<!-- tile 5 : Andrey Karpov -->
<div class="tile" style="left:688px;top:278px;width:116px;height:85.5px">
 <div class="abs" style="left:40.5px;top:25.5px;width:35px;height:35px;border-radius:50%;background:#5a30c5"></div>
 <div class="t" style="left:40.5px;top:34px;width:35px;text-align:center;font-size:18px;color:#fff">A</div>
 <svg class="abs" style="left:94.5px;top:8px" width="14" height="14"><circle cx="7" cy="7" r="7" fill="#202124" fill-opacity=".42"/><rect x="5.9" y="3.2" width="2.2" height="4.6" rx="1.1" fill="#d6d8db"/><path d="M4.3 6.9A2.7 2.7 0 0 0 9.7 6.9M7 9.6V11" fill="none" stroke="#d6d8db" stroke-width="0.8"/><path d="M3.6 3.2L10.6 10.6" stroke="#d6d8db" stroke-width="0.9"/><path d="M4.2 2.7L11.2 10.1" stroke="#2b2d30" stroke-width="0.6"/></svg>
 <div class="nm">Andrey Karpov</div>
</div>

<!-- tile 6 : Виктория Абдуллаева -->
<div class="tile" style="left:811px;top:278px;width:116.5px;height:85.5px">
 <svg class="abs" style="left:30.5px;top:0" width="55" height="86" viewBox="0 0 55 86">
  <g filter="url(#b1)">
   <rect x="-4" y="-4" width="63" height="94" fill="#a9a6a4"/>
   <rect x="-4" y="-4" width="26" height="94" fill="#b8b4b1"/>
   <path d="M0 14 H24 M22 -2 V50 M22 22 L56 30 M22 50 L0 52 M22 50 L56 58" stroke="#c8c5c2" stroke-width="0.8" fill="none"/>
   <path d="M30 30 L56 24 V70 L34 60Z" fill="#a29f9c"/>
   <path d="M27 -4 C29 8 38 16 48 17 L58 17 V-4Z" fill="#d9c29a"/>
   <path d="M34 -4 C36 4 44 8 58 8 V-4Z" fill="#b99a78"/>
   <rect x="51" y="34" width="6" height="22" fill="#e8e8f0"/>
   <path d="M-2 72 L15 67 V90 H-2Z" fill="#6a6a6a"/>
   <path d="M0 78 L14 72 M2 88 L14 78" stroke="#bdbdbd" stroke-width="0.7"/>
  </g>
 </svg>
 <svg class="abs" style="left:94px;top:8px" width="14" height="14"><circle cx="7" cy="7" r="7" fill="#202124" fill-opacity=".42"/><rect x="5.9" y="3.2" width="2.2" height="4.6" rx="1.1" fill="#d6d8db"/><path d="M4.3 6.9A2.7 2.7 0 0 0 9.7 6.9M7 9.6V11" fill="none" stroke="#d6d8db" stroke-width="0.8"/><path d="M3.6 3.2L10.6 10.6" stroke="#d6d8db" stroke-width="0.9"/><path d="M4.2 2.7L11.2 10.1" stroke="#2b2d30" stroke-width="0.6"/></svg>
 <div class="nm">Виктория Абдуллаева...</div>
</div>

<!-- tile 7 : others -->
<div class="tile" style="left:688px;top:371px;width:116px;height:84.5px">
 <svg class="abs" style="left:34px;top:19px" width="48" height="27" viewBox="0 0 48 27">
  <defs><clipPath id="ca"><circle cx="14" cy="13.5" r="11.7"/></clipPath><clipPath id="cb"><circle cx="35.7" cy="13.5" r="11.7"/></clipPath></defs>
  <g clip-path="url(#ca)"><g filter="url(#b05)"><rect x="0" y="0" width="28" height="27" fill="#5f7a58"/><rect x="0" y="0" width="10" height="14" fill="#8a9a80"/><path d="M3 27 C4 18 9 16 14 16 C19 16 24 18 25 27Z" fill="#f1f1f1"/><ellipse cx="14" cy="10" rx="4" ry="5" fill="#e2b79f"/><path d="M10 8 C10 3 18 3 18 8 C16 6 12 6 10 8Z" fill="#9a7a5a"/></g></g>
  <g clip-path="url(#cb)"><g filter="url(#b05)"><rect x="22" y="0" width="28" height="27" fill="#3f6fa8"/><ellipse cx="35.7" cy="11" rx="8" ry="9" fill="#2a1c1a"/><path d="M28 12 L27 24 H44 L43 12Z" fill="#2a1c1a"/><ellipse cx="35.7" cy="12" rx="4.2" ry="5.4" fill="#d9a88e"/><path d="M27 27 C28 21 32 20 35.7 20 C40 20 43 21 45 27Z" fill="#e08a8a"/><rect x="34" y="16" width="3.4" height="5" fill="#d9a88e"/></g></g>
 </svg>
 <div class="t" style="left:0;top:54px;width:116px;text-align:center;font-size:7.4px;color:#fff;font-weight:bold;letter-spacing:0.36px">Ещё 10 чел.</div>
</div>

<!-- tile 8 : Ирина Княжева -->
<div class="tile" style="left:811px;top:371px;width:116.5px;height:84.5px">
 <svg class="abs" style="left:0;top:8px" width="117" height="68" viewBox="0 0 117 68">
  <g filter="url(#b1)">
   <rect x="-4" y="0" width="126" height="68" fill="#969e94"/>
   <rect x="-4" y="0" width="126" height="12" fill="#8f978d"/>
   <g fill="#a8b0a4"><ellipse cx="12" cy="14" rx="6" ry="4"/><ellipse cx="30" cy="30" rx="6" ry="4"/><ellipse cx="10" cy="46" rx="6" ry="4"/><ellipse cx="28" cy="58" rx="6" ry="4"/><ellipse cx="96" cy="12" rx="6" ry="4"/><ellipse cx="108" cy="30" rx="6" ry="4"/><ellipse cx="92" cy="34" rx="5" ry="3"/><ellipse cx="106" cy="54" rx="6" ry="4"/><ellipse cx="78" cy="8" rx="5" ry="3"/><ellipse cx="34" cy="8" rx="5" ry="3"/></g>
   <rect x="73" y="40" width="15" height="24" rx="3" fill="#2a2a2e"/>
   <path d="M24 68 C28 58 40 54 54 54 C70 54 84 58 92 68Z" fill="#37363a"/>
   <path d="M30 66 C36 60 44 58 50 58 M62 58 C72 58 80 62 86 66" stroke="#6a6a6e" stroke-width="1.6" fill="none"/>
   <path d="M37 34 C35 16 44 9 54 9 C65 9 73 18 71 34 C71 44 72 52 73 58 L60 57 H48 L35 58 C36 52 37 44 37 34Z" fill="#cdbb99"/>
   <ellipse cx="54.5" cy="38" rx="10.5" ry="14" fill="#c19b8a"/>
   <path d="M44 28 C48 22 60 22 65 28 C60 26 50 26 44 28Z" fill="#d9c8a6"/>
   <path d="M46 36 h7 M56 36 h7" stroke="#6a5a58" stroke-width="1.2"/>
   <rect x="50" y="50" width="9" height="6" fill="#b58e7e"/>
  </g>
 </svg>
 <div class="nm" style="bottom:7.5px">Ирина Княжева</div>
</div>


<!-- ===== MEET BOTTOM BAR ===== -->
<div class="t" style="left:14px;top:474.5px;font-size:9px;font-weight:bold;color:#fff;letter-spacing:0.1px">16:03</div>
<div class="abs" style="left:44px;top:473px;width:1px;height:11px;background:#8a8d91"></div>
<div class="t" style="left:52px;top:474.5px;font-size:9.2px;font-weight:bold;color:#fff;letter-spacing:0.2px">ctv-xfst-pkh</div>
<!-- buttons -->
<div class="mb" style="left:345.5px"></div>
<svg class="abs" style="left:351px;top:473px" width="12" height="13" viewBox="0 0 12 13"><rect x="4.5" y="1" width="3" height="6.4" rx="1.5" fill="#fff"/><path d="M2.4 6.2A3.6 3.6 0 0 0 9.6 6.2M6 9.8V12" fill="none" stroke="#fff" stroke-width="1.1"/></svg>
<div class="mb" style="left:375.5px"></div>
<svg class="abs" style="left:380.5px;top:474px" width="13" height="10" viewBox="0 0 13 10"><rect x="1" y="1.2" width="7.4" height="7.6" rx="1" fill="none" stroke="#fff" stroke-width="1.4"/><path d="M8.6 4.2L12 1.8V8.2L8.6 5.8Z" fill="#fff"/></svg>
<div class="mb" style="left:406px"></div>
<svg class="abs" style="left:411.5px;top:474.5px" width="12" height="10" viewBox="0 0 12 10"><rect x="0.8" y="0.8" width="10.4" height="8.4" rx="1" fill="none" stroke="#fff" stroke-width="1.3"/><path d="M5.2 3.6H3.2V6.4H5.2M8.8 3.6H6.8V6.4H8.8" fill="none" stroke="#fff" stroke-width="1"/></svg>
<div class="mb" style="left:437px"></div>
<svg class="abs" style="left:442.5px;top:473.5px" width="12" height="12" viewBox="0 0 12 12"><circle cx="6" cy="6" r="4.9" fill="none" stroke="#fff" stroke-width="1.3"/><circle cx="4.2" cy="4.8" r="0.8" fill="#fff"/><circle cx="7.8" cy="4.8" r="0.8" fill="#fff"/><path d="M3.2 6.8A2.9 2.9 0 0 0 8.8 6.8Z" fill="#fff"/></svg>
<div class="mb" style="left:467px"></div>
<svg class="abs" style="left:472px;top:474px" width="13" height="11" viewBox="0 0 13 11"><rect x="0.8" y="0.8" width="11.4" height="9.4" rx="1" fill="none" stroke="#fff" stroke-width="1.3"/><path d="M6.5 3L9 5.6H7.4V8H5.6V5.6H4Z" fill="#fff"/></svg>
<div class="mb" style="left:497.5px"></div>
<svg class="abs" style="left:503px;top:472.5px" width="12" height="14" viewBox="0 0 12 14"><path d="M3 7V3.2C3 2.2 4.4 2.2 4.4 3.2V2C4.4 1 5.9 1 5.9 2V1.6C5.9 .6 7.4 .6 7.4 1.6V2.4C7.4 1.6 8.8 1.6 8.8 2.6V8.6C8.8 11.4 7.4 13 5.6 13C4 13 3 12 2.2 10.4L.9 7.6C.6 6.8 1.6 6.2 2.2 7Z" fill="none" stroke="#fff" stroke-width="1.1" stroke-linejoin="round"/><path d="M4.4 3V6.6M5.9 2V6.4M7.4 2.4V6.6" stroke="#fff" stroke-width="0.8"/></svg>
<div class="mb" style="left:528px"></div>
<svg class="abs" style="left:538px;top:474px" width="3" height="11" viewBox="0 0 3 11"><circle cx="1.5" cy="1.5" r="1.2" fill="#fff"/><circle cx="1.5" cy="5.5" r="1.2" fill="#fff"/><circle cx="1.5" cy="9.5" r="1.2" fill="#fff"/></svg>
<div class="abs" style="left:558px;top:468px;width:33px;height:23px;border-radius:11.5px;background:#ea4335"></div>
<svg class="abs" style="left:567.5px;top:475.5px" width="14" height="7" viewBox="0 0 14 7"><path d="M7 .8C4.200 .8 1.9 1.7 .6 3.200C.2 3.600 .2 4.100 .6 4.500L1.700 5.700C2 6 2.500 6.100 2.900 5.800L4.300 4.900C4.600 4.700 4.700 4.400 4.700 4.100V3C6.200 2.500 7.800 2.500 9.300 3V4.100C9.300 4.400 9.400 4.700 9.700 4.900L11.100 5.800C11.500 6.100 12 6 12.300 5.700L13.400 4.500C13.800 4.100 13.800 3.600 13.400 3.200C12.100 1.700 9.800 .8 7 .8Z" fill="#fff"/></svg>
<!-- right icons -->
<svg class="abs" style="left:824px;top:472.5px" width="13" height="13" viewBox="0 0 13 13"><circle cx="6.500" cy="6.500" r="5.300" fill="none" stroke="#fff" stroke-width="1.3"/><rect x="5.850" y="5.600" width="1.300" height="3.900" fill="#fff"/><circle cx="6.500" cy="3.900" r=".85" fill="#fff"/></svg>
<svg class="abs" style="left:851.5px;top:473.5px" width="15" height="11" viewBox="0 0 15 11"><circle cx="5.400" cy="3" r="2" fill="none" stroke="#fff" stroke-width="1.300"/><path d="M1.200 10V8.800C1.200 7.200 3.400 6.500 5.400 6.500C7.400 6.500 9.600 7.200 9.600 8.800V10Z" fill="none" stroke="#fff" stroke-width="1.300"/><path d="M9.600 1.100A2 2 0 0 1 9.600 4.900M11 6.800C12.600 7.200 13.800 7.800 13.800 8.900V10H11.600" fill="none" stroke="#fff" stroke-width="1.300"/></svg>
<svg class="abs" style="left:880.5px;top:473px" width="13" height="13" viewBox="0 0 13 13"><path d="M1.200 1.400H11.800V9.400H4.200L1.200 12Z" fill="none" stroke="#fff" stroke-width="1.300" stroke-linejoin="round"/><path d="M3.600 4H9.400M3.600 6.600H8" stroke="#fff" stroke-width="1.100"/></svg>
<svg class="abs" style="left:908px;top:472.500px" width="13" height="13" viewBox="0 0 13 13"><path d="M6.500 1.200L9.300 5.600H3.700Z" fill="none" stroke="#fff" stroke-width="1.200" stroke-linejoin="round"/><circle cx="3.600" cy="9.700" r="2" fill="none" stroke="#fff" stroke-width="1.200"/><rect x="7.700" y="7.800" width="3.900" height="3.900" fill="none" stroke="#fff" stroke-width="1.200"/></svg>
<div class="abs" style="left:858.5px;top:460px;width:15px;height:11px;border-radius:5.5px;background:#5f6368"></div>
<div class="t" style="left:858.5px;top:462.500px;width:15px;text-align:center;font-size:6.5px;font-weight:bold;color:#fff">18</div>


<!-- ===== WINDOWS TASKBAR ===== -->
<div id="taskbar" class="abs"></div>
<svg class="abs" style="left:9px;top:509px" width="9" height="9" viewBox="0 0 9 9"><path d="M0 1.200L3.800.700V4.200H0ZM4.300.600L9 0V4.200H4.300ZM0 4.700H3.800V8.300L0 7.800ZM4.300 4.700H9V9L4.300 8.400Z" fill="#fff"/></svg>
<div class="abs" style="left:28px;top:502.500px;width:168px;height:23.500px;background:#f3f3f3"></div>
<svg class="abs" style="left:35px;top:508px" width="11" height="11" viewBox="0 0 11 11"><circle cx="6.600" cy="4.200" r="3.200" fill="none" stroke="#222" stroke-width="1"/><path d="M4.300 6.600L.8 10.200" stroke="#222" stroke-width="1.100"/></svg>
<div class="t" style="left:52px;top:509px;font-size:9.500px;color:#2b2b2b">Поиск</div>
<!-- pinned apps -->
<div class="abs" style="left:207px;top:507px;width:13px;height:13px;border-radius:50% 50% 50% 50%/50% 50% 55% 55%;background:#7d5bd6"></div>
<svg class="abs" style="left:209.500px;top:509.500px" width="8" height="8" viewBox="0 0 8 8"><path d="M2 1.200C1.400 1.600 1.400 2.600 2.400 4C3.400 5.400 4.800 6.600 5.800 6.600C6.400 6.600 6.800 6 6.600 5.600L5.600 4.800L4.900 5.300C4.200 4.900 3.400 4 3.100 3.300L3.600 2.600L2.800 1.400C2.600 1.100 2.300 1 2 1.200Z" fill="#fff"/></svg>
<div class="abs" style="left:213px;top:515px;width:8.500px;height:8.500px;border-radius:50%;background:#e53935"></div>
<div class="t" style="left:213px;top:516.300px;width:8.500px;text-align:center;font-size:6px;color:#fff">2</div>
<div class="abs" style="left:234.500px;top:507px;width:13px;height:13px;border-radius:50%;background:#2563eb"></div>
<div class="t" style="left:234.500px;top:508.500px;width:13px;text-align:center;font-size:10px;font-weight:bold;color:#fff">Z</div>
<svg class="abs" style="left:262.500px;top:507.500px" width="14" height="12" viewBox="0 0 14 12"><path d="M0 1H5L6.200 2.400H14V12H0Z" fill="#e8b53a"/><rect x="0" y="3.600" width="14" height="8.400" fill="#f6d46b"/><rect x="3.600" y="7.600" width="6.800" height="4.400" fill="#4d9be6"/><rect x="5" y="9.400" width="4" height="2.600" fill="#f6d46b"/></svg>
<svg class="abs" style="left:291px;top:506px" width="15" height="15" viewBox="0 0 15 15"><path d="M7.500 1C4 1 2 3.600 2 6.500C2 9.400 4 11 6.400 11L7.400 9C5.600 9 4.600 7.900 4.600 6.400C4.600 4.600 5.800 3.400 7.600 3.400C8.800 3.400 9.600 3.800 10.200 4.600L12 3C11 1.700 9.400 1 7.500 1Z" fill="#e5302a"/><path d="M9 7.200L13.600 3.600L14.400 4.600L10.400 9.200Z" fill="#c9762c"/><path d="M3 11.400C5 10.400 8 9.400 10.400 9.200L11.200 13C8.600 13.400 5.600 13.800 3.400 13.600Z" fill="#e9c06a"/><path d="M1.400 10.800L4.800 9.200L5.400 10.400L2 12.200Z" fill="#6aa2dc"/></svg>
<div class="abs" style="left:320px;top:507px;width:13px;height:13px;border-radius:50%;background:#2ea6de"></div>
<svg class="abs" style="left:322px;top:510px" width="9" height="8" viewBox="0 0 9 8"><path d="M.4 3.600L8.400.400L7 7.400L4.600 5.600L3.400 6.800L3.200 4.800L6.600 1.800L2.400 4.400Z" fill="#fff"/></svg>
<div class="abs" style="left:348.500px;top:507px;width:13px;height:13px;border-radius:50%;background:#1e9bf0"></div>
<svg class="abs" style="left:351px;top:509.500px" width="8" height="8" viewBox="0 0 8 8"><path d="M4 .4V5.600M1.200 3.400L4 6.400L6.800 3.400" fill="none" stroke="#fff" stroke-width="1.700"/></svg>
<svg class="abs" style="left:376px;top:508.500px" width="16" height="11" viewBox="0 0 16 11"><rect x="0" y="0" width="14" height="10" rx="1" fill="#2b88d9"/><path d="M0 .6L7 5.600L14 .6" fill="none" stroke="#dff0ff" stroke-width="1.200"/><path d="M0 10L5 4.600M14 10L9 4.600" stroke="#8cc4f2" stroke-width=".8"/></svg>
<div class="abs" style="left:387px;top:514.500px;width:8.500px;height:8.500px;border-radius:50%;background:#1b2a38;border:.8px solid #e6e6e6"></div>
<div class="t" style="left:387px;top:516px;width:8.500px;text-align:center;font-size:5.500px;color:#fff">2</div>
<svg class="abs" style="left:405px;top:506.500px" width="16" height="14" viewBox="0 0 16 14"><circle cx="11.600" cy="3.400" r="2" fill="#7b83eb"/><circle cx="7" cy="2.800" r="2.400" fill="#5059c9"/><rect x="9.600" y="5.600" width="6" height="6" rx="1.600" fill="#7b83eb"/><rect x="3.600" y="5.400" width="8" height="8" rx="1.800" fill="#5059c9"/><rect x="0" y="4" width="7.600" height="7.600" rx="1" fill="#4b53bc"/><path d="M1.800 5.800H5.800M3.800 5.800V10" stroke="#fff" stroke-width="1.200"/></svg>
<div class="abs" style="left:428px;top:501.500px;width:28px;height:24.500px;background:#4d6573"></div>
<div class="abs" style="left:434.500px;top:506.500px;width:14px;height:14px;border-radius:50%;background:conic-gradient(from -30deg,#ea4335 0 120deg,#fbbc05 120deg 240deg,#34a853 240deg 360deg)"></div>
<div class="abs" style="left:438.200px;top:510.200px;width:6.600px;height:6.600px;border-radius:50%;background:#4285f4;border:1.200px solid #fff"></div>
<svg class="abs" style="left:463px;top:507px" width="15" height="13" viewBox="0 0 15 13"><rect x="4" y="0" width="11" height="13" rx="1" fill="#41a5ee"/><rect x="4" y="3.200" width="11" height="3.300" fill="#2b7cd3"/><rect x="4" y="6.500" width="11" height="3.300" fill="#185abd"/><rect x="4" y="9.800" width="11" height="3.200" fill="#103f91"/><rect x="0" y="2.600" width="8" height="8" rx=".8" fill="#185abd"/><path d="M1.600 4.400L2.700 8.800L4 5.400L5.300 8.800L6.400 4.400" fill="none" stroke="#fff" stroke-width=".9"/></svg>
<!-- running indicators -->
<div class="abs" style="left:204px;top:525px;width:20px;height:1px;background:#8cc0e8"></div>
<div class="abs" style="left:260px;top:525px;width:20px;height:1px;background:#8cc0e8"></div>
<div class="abs" style="left:403px;top:525px;width:20px;height:1px;background:#8cc0e8"></div>
<div class="abs" style="left:430px;top:525px;width:24px;height:1px;background:#9cc8ea"></div>
<div class="abs" style="left:460px;top:525px;width:20px;height:1px;background:#8cc0e8"></div>
<!-- tray -->
<svg class="abs" style="left:778px;top:511px" width="8" height="5" viewBox="0 0 8 5"><path d="M.6 4.400L4 1L7.400 4.400" fill="none" stroke="#fff" stroke-width="1"/></svg>
<svg class="abs" style="left:791px;top:508px" width="8" height="11" viewBox="0 0 8 11"><rect x="2.200" y=".4" width="3.600" height="6.400" rx="1.800" fill="#fff"/><path d="M.8 5.600A3.200 3.200 0 0 0 7.200 5.600V8.400H.8Z" fill="#e8e8e8"/><rect x="2" y="9.400" width="4" height="1" fill="#fff"/></svg>
<svg class="abs" style="left:804.500px;top:510px" width="11" height="7" viewBox="0 0 11 7"><rect x="1.600" y="1.200" width="8.800" height="4.600" fill="#fff"/><rect x="0" y="2.400" width="1.600" height="2.200" fill="#fff"/><rect x="2.600" y="0" width="2" height="2" fill="#fff"/><rect x="6.400" y="2.400" width="3" height="2.200" fill="#1b3148"/></svg>
<svg class="abs" style="left:818.500px;top:509px" width="11" height="9" viewBox="0 0 11 9"><path d="M.6 3H2.600L5 .8V8.200L2.600 6H.6Z" fill="none" stroke="#fff" stroke-width=".8"/><path d="M6.600 2.600A2.600 2.600 0 0 1 6.600 6.400M8 1.200A4.400 4.400 0 0 1 8 7.800" fill="none" stroke="#fff" stroke-width=".8"/><path d="M9.400 .4A5.800 5.800 0 0 1 9.400 8.600" fill="none" stroke="#9ab" stroke-width=".7"/></svg>
<svg class="abs" style="left:833.500px;top:508.500px" width="10" height="10" viewBox="0 0 10 10"><path d="M.8 9.600A8.600 8.600 0 0 1 9.400 1M.8 9.600A5.800 5.800 0 0 1 6.600 3.800M.8 9.600A3 3 0 0 1 3.800 6.600" fill="none" stroke="#c8d0d8" stroke-width="1"/><circle cx="1.400" cy="9" r="1" fill="#fff"/><path d="M6.400 9.600V5.400M8.600 9.600V3.400" stroke="#fff" stroke-width=".9"/></svg>
<div class="t" style="left:849px;top:510px;font-size:7px;color:#eef1f4;letter-spacing:-.1px">ENG</div>
<div class="t" style="left:866px;top:505.300px;width:40px;text-align:center;font-size:6.900px;color:#eef1f4;letter-spacing:-.15px">16:03</div>
<div class="t" style="left:866px;top:516.200px;width:40px;text-align:center;font-size:6.900px;color:#eef1f4;letter-spacing:-.15px">15.11.2023</div>
<svg class="abs" style="left:911px;top:509px" width="11" height="10" viewBox="0 0 11 10"><path d="M.6 .6H8.800V6.800H3L.6 9Z" fill="#fff"/><path d="M2 2.400H7.400M2 4.400H6" stroke="#1b3148" stroke-width=".8"/></svg>
<div class="abs" style="left:916.500px;top:514px;width:8px;height:8px;border-radius:50%;background:#16283e;border:.8px solid #e6e6e6"></div>
<div class="t" style="left:916.500px;top:515.600px;width:8px;text-align:center;font-size:5px;color:#fff">3</div>
<div class="abs" style="left:932.500px;top:501.500px;width:1px;height:24.500px;background:#6a7c8c"></div>


</div>
</body>
</html>
